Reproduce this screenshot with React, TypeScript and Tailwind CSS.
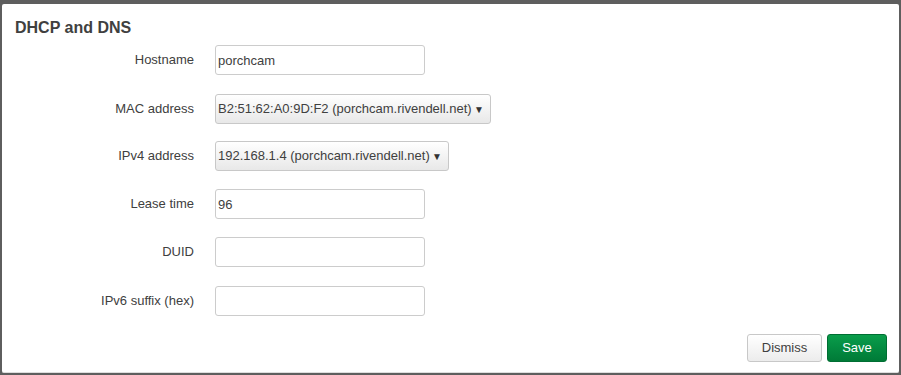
import React from "react";

const Label = ({ children }: { children: React.ReactNode }) => (
  <div className="w-[192px] shrink-0 text-right text-[13px] text-[#404040]">{children}</div>
);

const Input = ({ value }: { value?: string }) => (
  <input
    readOnly
    value={value ?? ""}
    className="h-[30px] w-[210px] rounded-[3px] border border-[#cccccc] bg-white px-[2px] text-[13px] text-[#404040] outline-none"
    style={{ fontFamily: '"Liberation Sans", Arial, sans-serif' }}
  />
);

const Select = ({ value, width }: { value: string; width: string }) => (
  <div
    className={`flex h-[30px] items-center justify-between rounded-[3px] border border-[#c8c8c8] bg-gradient-to-b from-[#ffffff] to-[#e8e8e8] pl-[2px] pr-[6px] text-[13px] text-[#404040] ${width}`}
  >
    <span>{value}</span>
    <span className="text-[10px] text-[#333]">▼</span>
  </div>
);

const Row = ({ label, children, mt }: { label: string; children: React.ReactNode; mt: string }) => (
  <div className={`flex items-center gap-[21px] ${mt}`}>
    <Label>{label}</Label>
    {children}
  </div>
);

export default function App() {
  return (
    <div
      className="h-[375px] w-[901px] overflow-hidden bg-[#5e5e5e] pl-[2px] pt-[4px]"
      style={{ fontFamily: '"Liberation Sans", Arial, sans-serif' }}
    >
      <div className="flex h-[369px] w-[897px] flex-col rounded-[2px] border-b border-[#dddddd] bg-white">
        <div className="px-[13px] pt-[14px] text-[16px] font-bold leading-[20px] text-[#404040]">DHCP and DNS</div>
        <div className="flex flex-col">
          <Row label="Hostname" mt="mt-[7px]">
            <Input value="porchcam" />
          </Row>
          <Row label="MAC address" mt="mt-[19px]">
            <Select value="B2:51:62:A0:9D:F2 (porchcam.rivendell.net)" width="w-[276px]" />
          </Row>
          <Row label="IPv4 address" mt="mt-[17px]">
            <Select value="192.168.1.4 (porchcam.rivendell.net)" width="w-[234px]" />
          </Row>
          <Row label="Lease time" mt="mt-[18px]">
            <Input value="96" />
          </Row>
          <Row label="DUID" mt="mt-[18px]">
            <Input />
          </Row>
          <Row label="IPv6 suffix (hex)" mt="mt-[19px]">
            <Input />
          </Row>
        </div>
        <div className="mt-[18px] flex justify-end gap-[5px] pr-[12px]">
          <button className="h-[28px] w-[75px] rounded-[3px] border border-[#c8c8c8] bg-gradient-to-b from-[#ffffff] to-[#ececec] text-[13px] text-[#404040]">
            Dismiss
          </button>
          <button className="h-[28px] w-[60px] rounded-[3px] border border-[#006e33] bg-gradient-to-b from-[#0a9d4b] to-[#007a37] text-[13px] text-white">
            Save
          </button>
        </div>
      </div>
    </div>
  );
}
